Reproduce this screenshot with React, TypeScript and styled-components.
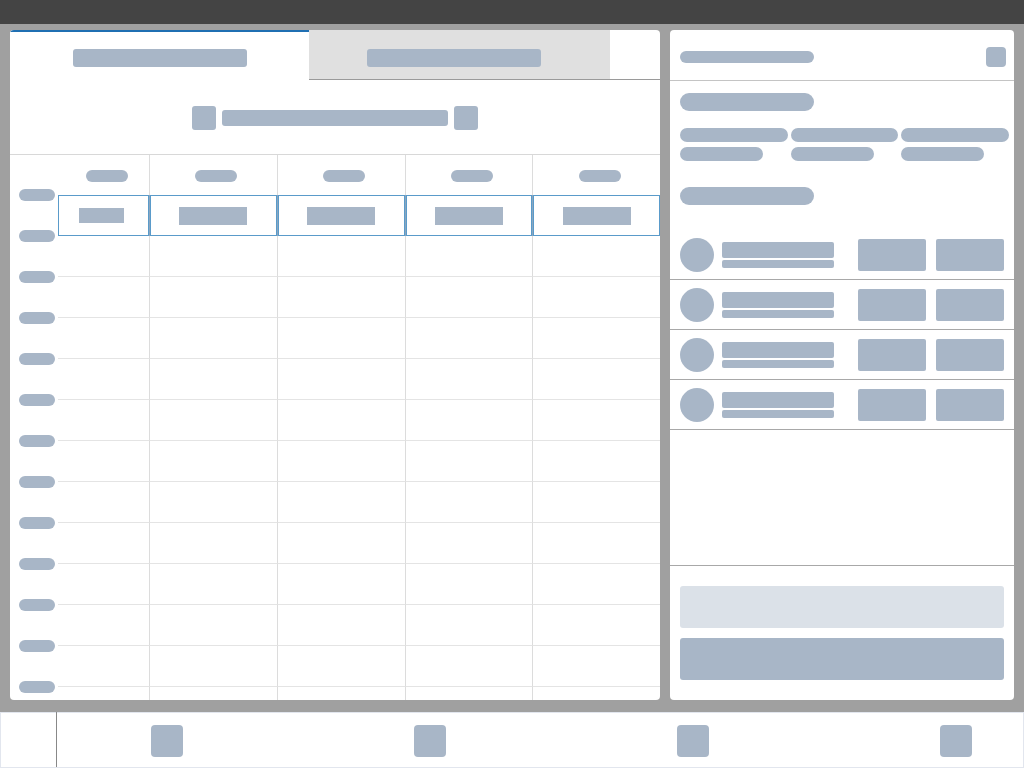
import React from "react";
import styled, { createGlobalStyle } from "styled-components";

const PH = "#a8b6c7";

const Global = createGlobalStyle`
  * { box-sizing: border-box; }
  html, body { margin: 0; padding: 0; }
  body {
    background: #a0a0a0;
    font-family: "Liberation Sans", Arial, sans-serif;
    overflow: hidden;
  }
`;

const Screen = styled.div`
  width: 1024px;
  height: 768px;
  display: flex;
  flex-direction: column;
`;

const TopBar = styled.div`
  height: 24px;
  background: #444444;
  flex: none;
`;

const Main = styled.div`
  flex: 1;
  display: flex;
  gap: 10px;
  padding: 6px 10px 12px;
  min-height: 0;
`;

const Card = styled.div<{ $w?: number }>`
  background: #fff;
  border-radius: 4px;
  overflow: hidden;
  display: flex;
  flex-direction: column;
  ${(p) => (p.$w ? `width: ${p.$w}px; flex: none;` : `flex: 1;`)}
`;

/* placeholders */
const Bar = styled.div<{ $w: number; $h: number; $r?: number; $light?: boolean }>`
  width: ${(p) => p.$w}px;
  height: ${(p) => p.$h}px;
  border-radius: ${(p) => (p.$r ?? 3)}px;
  background: ${(p) => (p.$light ? "#dbe1e8" : PH)};
  flex: none;
`;

const Pill = styled.div<{ $w: number; $h: number }>`
  width: ${(p) => p.$w}px;
  height: ${(p) => p.$h}px;
  border-radius: ${(p) => p.$h / 2}px;
  background: ${PH};
  flex: none;
`;

/* tabs */
const Tabs = styled.div`
  display: flex;
  height: 50px;
  flex: none;
`;

const Tab = styled.div<{ $active?: boolean; $w?: number }>`
  display: flex;
  align-items: center;
  justify-content: center;
  ${(p) => (p.$w ? `width: ${p.$w}px; flex: none;` : `flex: 1;`)}
  ${(p) =>
    p.$active
      ? `border-top: 2px solid #1f6fb2; background: #fff; padding-top: 4px;`
      : `background: #e0e0e0; border-bottom: 1px solid #9a9a9a; padding: 7px 12px 0 0;`}
`;

const TabRest = styled.div`
  flex: 1;
  border-bottom: 1px solid #9a9a9a;
`;

const Toolbar = styled.div`
  height: 75px;
  flex: none;
  display: flex;
  align-items: center;
  justify-content: center;
  gap: 6px;
  padding-top: 2px;
  border-bottom: 1px solid #d8d8d8;
`;

/* sheet */
const Sheet = styled.div`
  flex: 1;
  display: flex;
  min-height: 0;
  overflow: hidden;
`;

const Labels = styled.div`
  width: 48px;
  flex: none;
  padding-top: 19px;
  display: flex;
  flex-direction: column;
`;

const LabelSlot = styled.div`
  height: 41px;
  flex: none;
  display: flex;
  align-items: center;
  padding-left: 9px;
`;

const Table = styled.div`
  flex: 1;
  display: grid;
  grid-template-columns: 91px repeat(4, 1fr);
  grid-auto-rows: 41px;
  grid-template-rows: 40px;
  align-content: start;
`;

const Cell = styled.div<{ $first?: boolean; $sel?: boolean; $head?: boolean }>`
  display: flex;
  align-items: center;
  justify-content: center;
  border-left: ${(p) => (p.$first ? "none" : p.$sel ? "1px solid #8ba6bf" : "1px solid #dcdcdc")};
  border-bottom: ${(p) => (p.$head || p.$sel ? "none" : "1px solid #e4e4e4")};
  ${(p) => (p.$sel ? `box-shadow: inset 0 0 0 1px #5a9bca;` : "")}
  ${(p) => (p.$sel && p.$first ? `padding-right: 5px;` : "")}
  ${(p) => (p.$head ? `padding: 2px 0 0 6px;` : "")}
`;

/* right panel */
const PanelHead = styled.div`
  height: 51px;
  flex: none;
  display: flex;
  align-items: center;
  justify-content: space-between;
  padding: 4px 8px 0 10px;
  border-bottom: 1px solid #c4c4c4;
`;

const PanelBody = styled.div`
  padding: 12px 10px 0;
  display: flex;
  flex-direction: column;
`;

const Facts = styled.div`
  display: grid;
  grid-template-columns: 108px 107px 108px;
  column-gap: 3px;
  row-gap: 5px;
  margin: 17px 0 26px;
`;

const List = styled.div`
  margin-top: 25px;
  display: flex;
  flex-direction: column;
`;

const Item = styled.div`
  height: 50px;
  display: flex;
  align-items: center;
  padding: 1px 10px 0;
  border-bottom: 1px solid #a8a8a8;
`;

const Avatar = styled.div`
  width: 34px;
  height: 34px;
  border-radius: 50%;
  background: ${PH};
  flex: none;
`;

const ItemText = styled.div`
  margin-left: 8px;
  display: flex;
  flex-direction: column;
  gap: 2px;
`;

const ItemActions = styled.div`
  margin-left: auto;
  display: flex;
  gap: 10px;
`;

const Spacer = styled.div`
  flex: 1;
`;

const PanelFoot = styled.div`
  flex: none;
  border-top: 1px solid #a8a8a8;
  padding: 20px 10px;
  display: flex;
  flex-direction: column;
  gap: 10px;
`;

/* bottom nav */
const BottomBar = styled.div`
  height: 56px;
  flex: none;
  background: #fff;
  border: 1px solid #e2e6ee;
  display: flex;
`;

const NavLead = styled.div`
  width: 56px;
  flex: none;
  border-right: 1px solid #888;
  margin-top: -1px;
`;

const NavItems = styled.div`
  flex: 1;
  display: flex;
  align-items: center;
  justify-content: space-between;
  padding: 1px 51px 0 94px;
`;

const NavIcon = styled.div`
  width: 32px;
  height: 32px;
  border-radius: 4px;
  background: ${PH};
`;

const rows = Array.from({ length: 12 });
const labels = Array.from({ length: 13 });

export default function App() {
  return (
    <Screen>
      <Global />
      <TopBar />
      <Main>
        <Card $w={650}>
          <Tabs>
            <Tab $active $w={299}>
              <Bar $w={174} $h={18} />
            </Tab>
            <Tab $w={301}>
              <Bar $w={174} $h={18} />
            </Tab>
            <TabRest />
          </Tabs>
          <Toolbar>
            <Bar $w={24} $h={24} $r={3} />
            <Bar $w={226} $h={16} />
            <Bar $w={24} $h={24} $r={3} />
          </Toolbar>
          <Sheet>
            <Labels>
              {labels.map((_, i) => (
                <LabelSlot key={i}>
                  <Pill $w={36} $h={12} />
                </LabelSlot>
              ))}
            </Labels>
            <Table>
              {[0, 1, 2, 3, 4].map((c) => (
                <Cell key={"h" + c} $first={c === 0} $head>
                  <Pill $w={42} $h={12} />
                </Cell>
              ))}
              {[0, 1, 2, 3, 4].map((c) => (
                <Cell key={"s" + c} $first={c === 0} $sel>
                  {c === 0 ? <Bar $w={45} $h={15} $r={0} /> : <Bar $w={68} $h={18} $r={0} />}
                </Cell>
              ))}
              {rows.map((_, r) =>
                [0, 1, 2, 3, 4].map((c) => <Cell key={r + "-" + c} $first={c === 0} />)
              )}
            </Table>
          </Sheet>
        </Card>
        <Card>
          <PanelHead>
            <Pill $w={134} $h={12} />
            <Bar $w={20} $h={20} $r={4} />
          </PanelHead>
          <PanelBody>
            <Pill $w={134} $h={18} />
            <Facts>
              <Pill $w={108} $h={14} />
              <Pill $w={107} $h={14} />
              <Pill $w={108} $h={14} />
              <Pill $w={83} $h={14} />
              <Pill $w={83} $h={14} />
              <Pill $w={83} $h={14} />
            </Facts>
            <Pill $w={134} $h={18} />
          </PanelBody>
          <List>
            {[0, 1, 2, 3].map((i) => (
              <Item key={i}>
                <Avatar />
                <ItemText>
                  <Bar $w={112} $h={16} $r={2} />
                  <Bar $w={112} $h={8} $r={2} />
                </ItemText>
                <ItemActions>
                  <Bar $w={68} $h={32} $r={2} />
                  <Bar $w={68} $h={32} $r={2} />
                </ItemActions>
              </Item>
            ))}
          </List>
          <Spacer />
          <PanelFoot>
            <Bar $w={324} $h={42} $r={3} $light />
            <Bar $w={324} $h={42} $r={3} />
          </PanelFoot>
        </Card>
      </Main>
      <BottomBar>
        <NavLead />
        <NavItems>
          <NavIcon />
          <NavIcon />
          <NavIcon />
          <NavIcon />
        </NavItems>
      </BottomBar>
    </Screen>
  );
}
